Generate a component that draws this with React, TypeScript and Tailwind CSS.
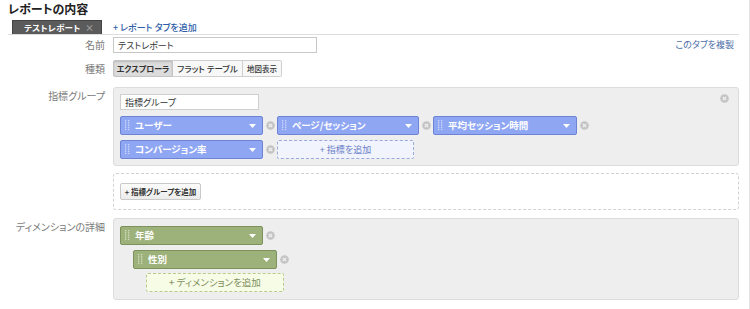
import React from 'react';

const font = "font-['Noto_Sans_CJK_JP','Noto_Sans',sans-serif] [font-feature-settings:'palt']";

const Grip = () => (
  <svg width="5" height="11" viewBox="0 0 5 11" className="shrink-0">
    {[0, 1, 2, 3, 4].map((r) => (
      <g key={r}>
        <rect x="0" y={r * 2.2} width="1.3" height="1.3" fill="rgba(255,255,255,0.55)" />
        <rect x="3" y={r * 2.2} width="1.3" height="1.3" fill="rgba(255,255,255,0.55)" />
      </g>
    ))}
  </svg>
);

const Caret = () => (
  <svg width="7" height="4" viewBox="0 0 7 4" className="shrink-0">
    <path d="M0 0 L7 0 L3.5 4 Z" fill="#ffffff" />
  </svg>
);

const RemoveDot = () => (
  <svg width="9" height="9" viewBox="0 0 9 9" className="shrink-0">
    <circle cx="4.5" cy="4.5" r="4.3" fill="#c4c4c4" />
    <path d="M2.8 2.8 L6.2 6.2 M6.2 2.8 L2.8 6.2" stroke="#f2f2f2" strokeWidth="1.2" />
  </svg>
);

const Chip = ({ label, kind, width = 'w-[143px]' }: { label: string; kind: 'metric' | 'dim'; width?: string }) => (
  <div className="flex items-center">
    <div
      className={`${width} h-[19px] flex items-center pl-[4px] pr-[6px] rounded-[2px] border ${
        kind === 'metric' ? 'bg-[#8fa6f3] border-[#6d84d6]' : 'bg-[#9db27a] border-[#7d925b]'
      }`}
    >
      <Grip />
      <span className="ml-[5px] text-white font-bold text-[9.5px] leading-none flex-1 whitespace-nowrap">{label}</span>
      <Caret />
    </div>
    <div className="ml-[3px] mr-[2px]">
      <RemoveDot />
    </div>
  </div>
);

const Label = ({ children, className = '' }: { children: React.ReactNode; className?: string }) => (
  <div className={`w-[105px] shrink-0 text-right text-[10px] text-[#7a7a7a] leading-[14px] whitespace-nowrap ${className}`}>
    {children}
  </div>
);

export default function App() {
  return (
    <div className={`w-[750px] h-[309px] bg-white border-r border-[#e3e3e3] overflow-hidden pt-[1px] ${font}`}>
      <div className="pl-[8px] h-[16px] leading-[16px] text-[12px] font-bold text-[#222]">レポートの内容</div>

      <div className="mt-[3px] ml-[8px] mr-[10px] h-[15px] flex items-end border-b border-[#dedede]">
        <div className="ml-[4px] w-[90px] h-[14px] bg-[#5b5b5b] border border-[#444] border-b-0 flex items-center pl-[11px] pr-[7px]">
          <span className="text-white font-bold text-[8.5px] tracking-[0.3px] leading-none flex-1 whitespace-nowrap">テストレポート</span>
          <span className="text-[#9a9a9a] text-[9px] leading-none font-bold">×</span>
        </div>
        <div className="ml-[11px] h-[14px] flex items-center text-[9px] text-[#2f5ea8] font-medium leading-none whitespace-nowrap">
          + レポート タブを追加
        </div>
      </div>

      <div className="mt-[2px] flex items-center mr-[15px]">
        <Label>名前</Label>
        <div className="ml-[8px] w-[204px] h-[16px] border border-[#c8c8c8] flex items-center pl-[4px] text-[9px] text-[#333] leading-none">
          テストレポート
        </div>
        <div className="ml-auto text-[9px] text-[#4a6ea8] leading-none -mt-[2px] whitespace-nowrap">このタブを複製</div>
      </div>

      <div className="mt-[7px] flex items-center">
        <Label>種類</Label>
        <div className="ml-[8px] flex h-[17px] text-[8px] font-bold leading-none text-[#333] whitespace-nowrap">
          <div className="w-[60px] flex items-center justify-center bg-[#dcdcdc] border border-[#c4c4c4] shadow-[inset_0_1px_2px_rgba(0,0,0,0.15)] rounded-l-[2px]">
            エクスプローラ
          </div>
          <div className="w-[70px] flex items-center justify-center bg-[#f8f8f8] border border-l-0 border-[#cfcfcf] font-medium text-[8.5px]">
            フラット テーブル
          </div>
          <div className="w-[39px] flex items-center justify-center bg-[#f8f8f8] border border-l-0 border-[#cfcfcf] rounded-r-[2px] font-medium text-[7.5px]">
            地図表示
          </div>
        </div>
      </div>

      <div className="mt-[10px] flex items-start mr-[10px]">
        <Label className="pt-[2px]">指標グループ</Label>
        <div className="ml-[8px] flex-1 bg-[#eeeeee] border border-[#dcdcdc] rounded-[3px] pt-[6px] pb-[6px] pl-[6px] pr-[9px] flex flex-col gap-[6px]">
          <div className="flex items-start justify-between">
            <div className="w-[139px] h-[16px] bg-white border border-[#cfcfcf] flex items-center pl-[4px] text-[9px] text-[#333] leading-none">
              指標グループ
            </div>
            <div className="mt-[0px]">
              <RemoveDot />
            </div>
          </div>
          <div className="flex flex-col gap-[5px]">
            <div className="flex">
              <Chip label="ユーザー" kind="metric" />
              <Chip label="ページ/セッション" kind="metric" width="w-[142px]" />
              <Chip label="平均セッション時間" kind="metric" width="w-[144px]" />
            </div>
            <div className="flex">
              <Chip label="コンバージョン率" kind="metric" />
              <div className="w-[137px] h-[19px] border border-dashed border-[#9aa9dc] bg-[#f1f4fc] rounded-[2px] flex items-center justify-center text-[9px] text-[#6a7ec8] leading-none whitespace-nowrap">
                + 指標を追加
              </div>
            </div>
          </div>
        </div>
      </div>

      <div className="mt-[7px] flex mr-[10px]">
        <div className="w-[105px] shrink-0" />
        <div className="ml-[8px] flex-1 h-[37px] border border-dashed border-[#d2d2d2] rounded-[3px] flex items-center pl-[6px]">
          <div className="w-[81px] h-[17px] border border-[#c9c9c9] rounded-[2px] bg-gradient-to-b from-[#fbfbfb] to-[#ececec] flex items-center justify-center text-[7.5px] font-bold text-[#333] leading-none whitespace-nowrap">
            + 指標グループを追加
          </div>
        </div>
      </div>

      <div className="mt-[8px] flex items-start mr-[10px]">
        <Label className="pt-[2px]">ディメンションの詳細</Label>
        <div className="ml-[8px] flex-1 bg-[#eeeeee] border border-[#dcdcdc] rounded-[3px] pt-[7px] pb-[7px] pl-[6px] flex flex-col">
          <Chip label="年齢" kind="dim" />
          <div className="mt-[5px] ml-[13px]">
            <Chip label="性別" kind="dim" width="w-[144px]" />
          </div>
          <div className="mt-[4px] ml-[26px] w-[138px] h-[19px] border border-dashed border-[#b8c98e] bg-[#f6fce6] rounded-[2px] flex items-center justify-center text-[9.5px] text-[#7d8f5c] leading-none whitespace-nowrap">
            + ディメンションを追加
          </div>
        </div>
      </div>
    </div>
  );
}
